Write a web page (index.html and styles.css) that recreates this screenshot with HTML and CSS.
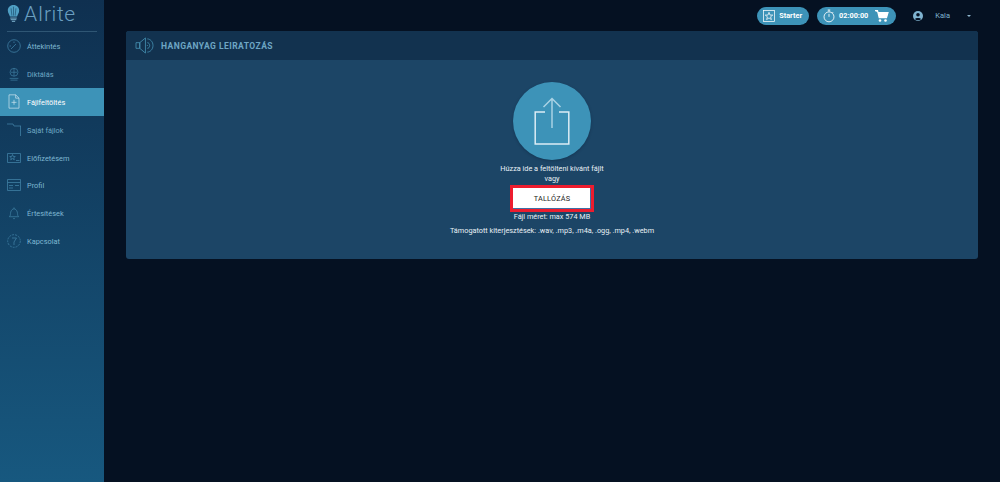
FILE: index.html
```html
<!DOCTYPE html>
<html lang="hu">
<head>
<meta charset="utf-8">
<title>AIrite</title>
<link rel="stylesheet" href="styles.css">
</head>
<body>
<div class="app">
  <aside class="sidebar">
    <div class="brand">
      <svg class="brand-icon" viewBox="0 0 16 24"><path d="M8 1C3.600 1 1 4.200 1 7.800c0 3 1.800 4.600 2.600 7.200h8.800c.8-2.600 2.600-4.200 2.600-7.200C15 4.200 12.400 1 8 1z" fill="#4f9fc4"/><path d="M8 3v11M5 5l1 9M11 5l-1 9" stroke="#12405f" stroke-width=".7" fill="none"/><path d="M4 17h8M4.500 19h7M6 21h4" stroke="#7fb6d2" stroke-width="1.200"/></svg>
      <span class="brand-name">AIrite</span>
    </div>
    <nav class="nav">
      <a class="nav-item"><svg class="nav-icon" viewBox="0 0 14 14"><circle cx="7" cy="7" r="6.300"/><path d="M4 10l5-5M2.500 7H4M7 2.500V4"/></svg><span>Áttekintés</span></a>
      <a class="nav-item dim"><svg class="nav-icon" viewBox="0 0 14 16"><circle cx="7" cy="6" r="4.500"/><path d="M3.500 6h7M7 1.500v9M2 13h10M3 15h8"/></svg><span>Diktálás</span></a>
      <a class="nav-item active"><svg class="nav-icon" viewBox="0 0 14 18"><path d="M1 17V1h8l4 4v12z"/><path d="M9 1v4h4M7 7v6M4 10h6"/></svg><span>Fájlfeltöltés</span></a>
      <a class="nav-item dim"><svg class="nav-icon" viewBox="0 0 14 14"><path d="M0 1h6l1 2h7M13.500 3v10"/></svg><span>Saját fájlok</span></a>
      <a class="nav-item"><svg class="nav-icon" viewBox="0 0 14 14"><path d="M.5 2.500h13v9H.5z"/><path d="M5.500 3.500l.8 2h2l-1.600 1.300.6 2-1.800-1.200-1.800 1.200.6-2L2.700 5.500h2zM9 9.500h3.500"/></svg><span>Előfizetésem</span></a>
      <a class="nav-item"><svg class="nav-icon" viewBox="0 0 14 14"><path d="M.5 1.500h13v11H.5zM.5 4.500h13M2 7.500h4M2 10h4M8 7.500h4"/></svg><span>Profil</span></a>
      <a class="nav-item"><svg class="nav-icon" viewBox="0 0 14 15"><path d="M2 11.500c1.500-1 1-3 1.500-5C4 4.500 5.500 3 7 3s3 1.500 3.500 3.500c.5 2 0 4 1.500 5zM6 13.500h2M7 1.500V3"/></svg><span>Értesítések</span></a>
      <a class="nav-item"><svg class="nav-icon" viewBox="0 0 14 14"><circle class="dashed" cx="7" cy="7" r="6.300"/><path d="M5 4h4.500L7 8v3"/></svg><span>Kapcsolat</span></a>
    </nav>
  </aside>
  <div class="main">
    <header class="topbar">
      <div class="pill">
        <svg class="pill-icon" viewBox="0 0 13 13"><rect x=".5" y=".5" width="12" height="12" fill="none" stroke="#fff" stroke-width=".8"/><path d="M6.500 2.500l1.100 3h3l-2.400 1.900.9 3-2.600-1.800-2.600 1.800.9-3-2.400-1.900h3z" fill="none" stroke="#fff" stroke-width=".8"/></svg>
        <span>Starter</span>
      </div>
      <div class="pill pill-time">
        <svg class="pill-icon large" viewBox="0 0 14 16"><circle cx="7" cy="9" r="5.800" fill="none" stroke="#fff" stroke-width="1"/><path d="M5.500 1h3M7 1v2M7 9V5.500M11 3.500l1 1" stroke="#fff" stroke-width="1" fill="none"/></svg>
        <span class="time">02:00:00</span>
        <svg class="cart" viewBox="0 0 14 12"><path d="M0 .7h2.500l1.700 7h7.300l1.500-5.200H3" fill="#fff" stroke="#fff" stroke-width="1.200"/><circle cx="5" cy="10.500" r="1.300" fill="#fff"/><circle cx="10.500" cy="10.500" r="1.300" fill="#fff"/></svg>
      </div>
      <div class="user">
        <svg class="avatar" viewBox="0 0 10 10"><circle cx="5" cy="5" r="5" fill="#7fb3d0"/><circle cx="5" cy="3.800" r="1.800" fill="#061223"/><path d="M1.800 8c.7-1.500 5.700-1.500 6.400 0a4.500 4.500 0 0 1-6.400 0z" fill="#061223"/></svg>
        <span class="user-name">Kala</span>
        <span class="caret"></span>
      </div>
    </header>
    <section class="panel">
      <div class="panel-head">
        <svg class="head-icon" viewBox="0 0 20 18"><path d="M1 6h4v6H1zM5 6l6-5v16l-6-5z"/><path d="M13 2c3 0 6 3 6 7s-3 7-6 7M13 6c1.500 0 2.500 1.300 2.500 3s-1 3-2.500 3M13 8.500v1"/></svg>
        <h1 class="panel-title">HANGANYAG LEIRATOZÁS</h1>
      </div>
      <div class="panel-body">
        <div class="upload-circle">
          <svg class="upload-icon" viewBox="0 0 36 48"><path class="upload-box" d="M11 15H1.200v32h33.600V15H25"/><path class="upload-box light" d="M18 31V1.500M9.500 10L18 1.500 26.500 10"/></svg>
        </div>
        <p class="line first">Húzza ide a feltölteni kívánt fájlt</p>
        <p class="line">vagy</p>
        <button class="browse" type="button">TALLÓZÁS</button>
        <p class="line size">Fájl méret: max 574 MB</p>
        <p class="line formats">Támogatott kiterjesztések: .wav, .mp3, .m4a, .ogg, .mp4, .webm</p>
      </div>
    </section>
  </div>
</div>
</body>
</html>
```

FILE: styles.css
```css
* { box-sizing: border-box; }
html, body { margin: 0; height: 100%; }
body {
  background: #051122;
  font-family: Roboto, "Liberation Sans", sans-serif;
  overflow: hidden;
}
.app { display: flex; height: 482px; }
.sidebar {
  width: 104px;
  flex: none;
  background: linear-gradient(180deg, #0f3050 0%, #17587f 100%);
}
.brand {
  display: flex;
  align-items: center;
  gap: 4px;
  height: 32px;
  margin: 0 7px;
  padding-bottom: 3px;
  border-bottom: 1px solid #2f5674;
}
.brand-icon { width: 13px; height: 20px; }
.brand-name {
  font-family: Roboto, sans-serif;
  font-size: 21px;
  font-weight: 300;
  letter-spacing: .6px;
  color: #6a9fc0;
}
.nav { display: flex; flex-direction: column; }
.nav-item {
  display: flex;
  align-items: center;
  height: 27.900px;
  padding-left: 7px;
  font-size: 7.400px;
  color: #7fb8d2;
}
.nav-item.dim { color: #6fa8c4; }
.nav-item span { margin-left: 6px; padding-top: 1px; }
.nav-item.active {
  background: #3d93b8;
  color: #fff;
}
.nav-icon {
  width: 14px;
  height: 14px;
  flex: none;
  fill: none;
  stroke: #3f7fa3;
  stroke-width: .8;
}
.active .nav-icon { stroke: #d6e8f1; height: 15px; }
.dashed { stroke-dasharray: 2 1; }
.main { flex: 1; min-width: 0; padding: 0 22px; }
.topbar {
  display: flex;
  align-items: center;
  justify-content: flex-end;
  height: 31px;
}
.pill {
  display: flex;
  align-items: center;
  height: 18px;
  padding: 0 7px 0 6px;
  border-radius: 9px;
  background: #3d93b8;
  color: #fff;
  font-size: 7.300px;
  font-weight: 700;
}
.pill-icon { width: 12px; height: 12px; margin-right: 4px; }
.pill-icon.large { height: 14px; }
.pill-time { margin-left: 8px; }
.time { margin-right: 7px; }
.cart { width: 14px; height: 12px; }
.user {
  display: flex;
  align-items: center;
  margin-left: 17px;
  padding-right: 7px;
  color: #7fb3d0;
  font-size: 7.500px;
}
.avatar { width: 10px; height: 10px; }
.user-name { margin-left: 12px; }
.caret {
  margin-left: 17px;
  border-left: 2.500px solid transparent;
  border-right: 2.500px solid transparent;
  border-top: 2.500px solid #8fb8cf;
}
.panel {
  border-radius: 3px;
  overflow: hidden;
  background: #1c4566;
}
.panel-head {
  display: flex;
  align-items: center;
  height: 29px;
  padding-left: 9px;
  background: #12324f;
}
.head-icon {
  width: 19px;
  height: 17px;
  fill: none;
  stroke: #4a9abd;
  stroke-width: .8;
}
.panel-title {
  margin: 0 0 0 7px;
  font-size: 8.500px;
  font-weight: 700;
  letter-spacing: .45px;
  color: #6ea6c4;
}
.panel-body {
  display: flex;
  flex-direction: column;
  align-items: center;
  height: 199px;
  padding-top: 22px;
}
.upload-circle {
  display: flex;
  align-items: center;
  justify-content: center;
  width: 78px;
  height: 78px;
  border-radius: 50%;
  background: #3d93b8;
  box-shadow: 0 1px 3px rgba(5, 15, 32, .25);
}
.upload-icon { width: 36px; height: 48px; fill: none; }
.upload-box { stroke: #dcedf5; stroke-width: 1.500; }
.upload-box.light { stroke: #a9d2e4; }
.line {
  margin: 0;
  font-size: 7.300px;
  line-height: 10px;
  color: #e8f0f5;
  text-align: center;
}
.first { margin-top: 4px; }
.browse {
  width: 84px;
  height: 27px;
  margin: 1px 0 0;
  padding: 0;
  border: 3px solid #ed1c2e;
  border-radius: 0;
  background: #fff;
  box-shadow: inset -1px -1px 0 #3f6fa5;
  font: 7.300px Roboto, "Liberation Sans", sans-serif;
  letter-spacing: .2px;
  color: #222;
}
.size { margin-top: 0; }
.formats { margin-top: 4px; }
```
